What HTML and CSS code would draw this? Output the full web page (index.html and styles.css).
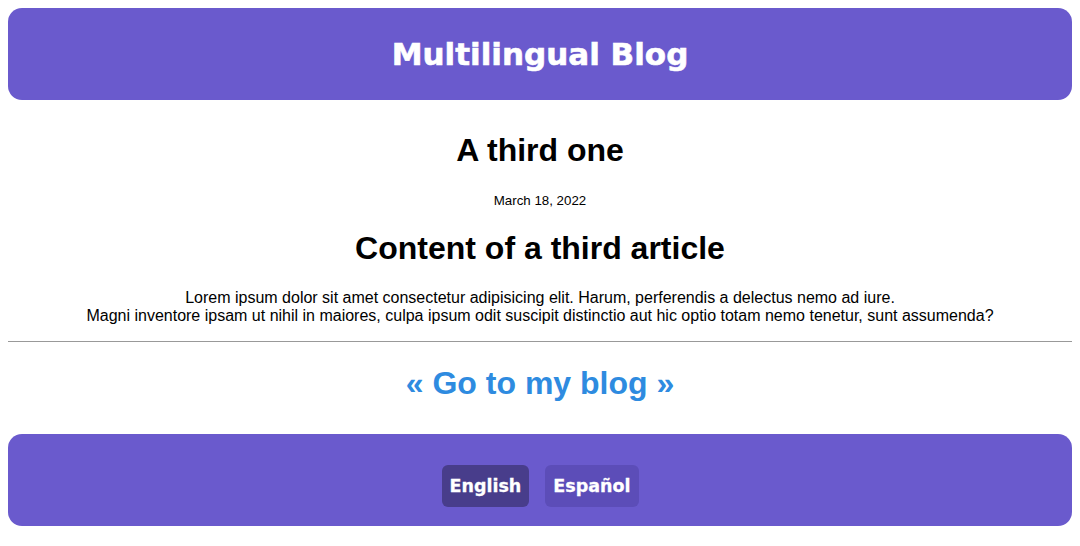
FILE: index.html
```html
<!DOCTYPE html>
<html lang="en">
<head>
<meta charset="utf-8">
<title>Multilingual Blog</title>
<link rel="stylesheet" href="styles.css">
</head>
<body>
<header class="site-header">
  <h1 class="site-title">Multilingual Blog</h1>
</header>
<main class="post">
  <h1 class="post-title">A third one</h1>
  <p class="post-date">March 18, 2022</p>
  <h2 class="post-subtitle">Content of a third article</h2>
  <p class="post-body">Lorem ipsum dolor sit amet consectetur adipisicing elit. Harum, perferendis a delectus nemo ad iure.<br>Magni inventore ipsam ut nihil in maiores, culpa ipsum odit suscipit distinctio aut hic optio totam nemo tenetur, sunt assumenda?</p>
</main>
<hr class="divider">
<a class="back-link" href="#">« Go to my blog »</a>
<footer class="site-footer">
  <nav class="lang-nav">
    <a class="lang-btn active" href="#">English</a>
    <a class="lang-btn" href="#">Español</a>
  </nav>
</footer>
</body>
</html>
```
FILE: styles.css
```css
body {
  margin: 8px;
  font-family: "Liberation Sans", Arial, sans-serif;
  color: #000;
  background: #fff;
}
.site-header {
  background: #6a5acd;
  border-radius: 14px;
  height: 92px;
  display: flex;
  align-items: center;
  justify-content: center;
}
.site-title {
  margin: 0;
  color: #fff;
  font-family: "DejaVu Sans", "Liberation Sans", sans-serif;
  font-size: 31px;
  font-weight: bold;
  -webkit-text-stroke: 0.6px #fff;
}
.post {
  text-align: center;
}
.post-title {
  margin: 32px 0 0;
  font-size: 32px;
  line-height: 37px;
}
.post-date {
  margin: 24px 0 0;
  font-size: 13.3px;
  line-height: 15px;
}
.post-subtitle {
  margin: 22px 0 0;
  font-size: 32px;
  line-height: 37px;
}
.post-body {
  margin: 22px 0 0;
  font-size: 16px;
  line-height: 18px;
}
.divider {
  margin: 16px 0 0;
  border: 0;
  border-top: 1px solid #999;
  height: 0;
}
.back-link {
  display: block;
  text-align: center;
  color: #2e8be0;
  text-decoration: none;
  font-weight: bold;
  font-size: 32px;
  line-height: 37px;
  margin-top: 23px;
}
.site-footer {
  margin-top: 32px;
  background: #6a5acd;
  border-radius: 14px;
  height: 92px;
  display: flex;
  align-items: center;
  justify-content: center;
}
.lang-nav {
  display: flex;
  gap: 16px;
  margin-top: 11px;
}
.lang-btn {
  color: #fff;
  text-decoration: none;
  font-family: "DejaVu Sans", "Liberation Sans", sans-serif;
  font-weight: bold;
  font-size: 17.5px;
  line-height: 42px;
  padding: 0 8px;
  border-radius: 6px;
  background: #5c4db8;
  -webkit-text-stroke: 0.3px #fff;
}
.lang-btn.active {
  background: #483d8b;
}
```
